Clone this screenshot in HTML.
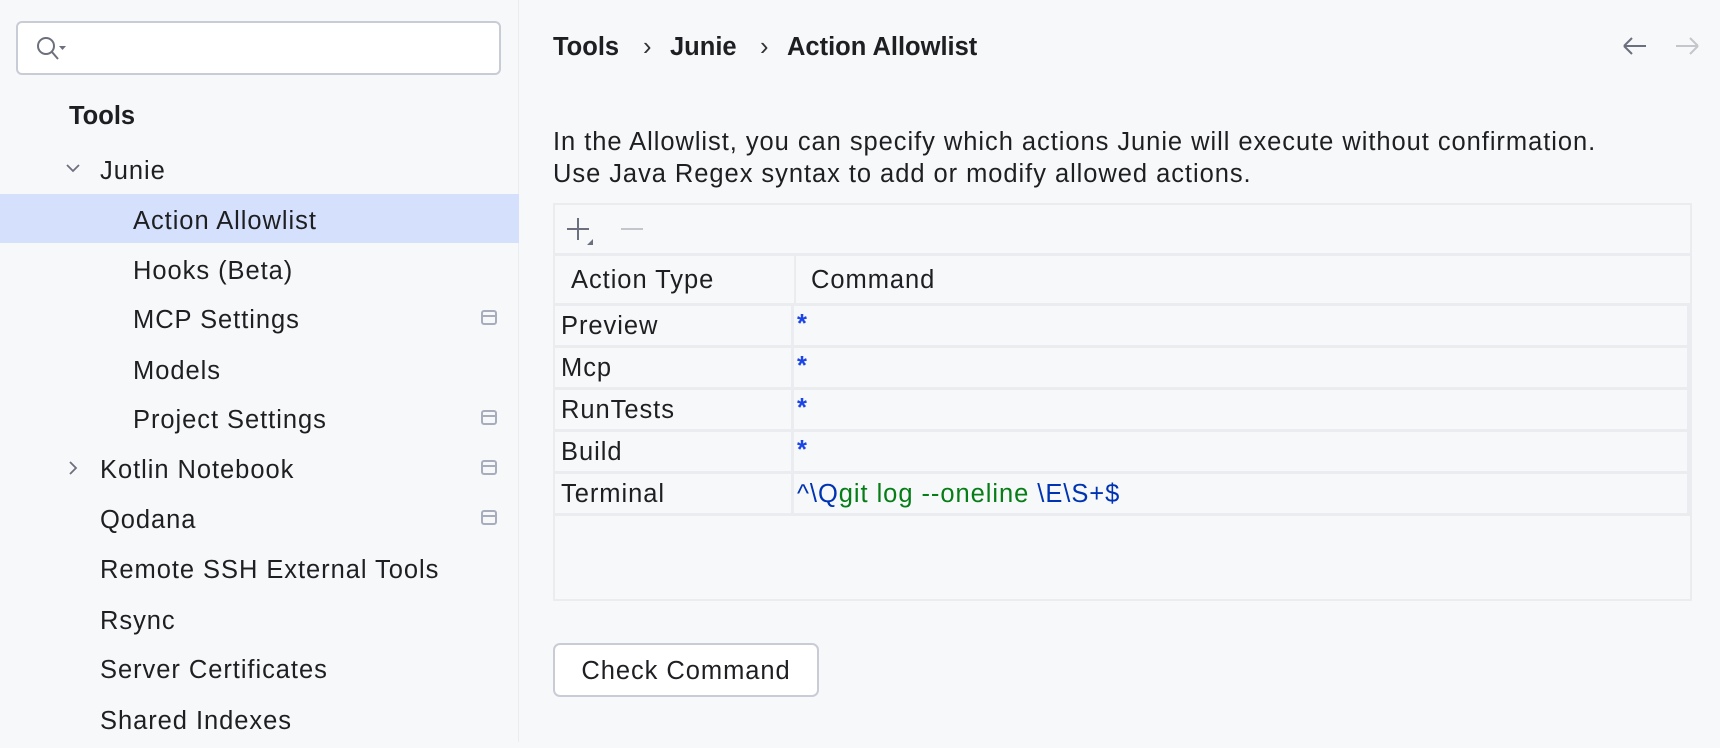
<!DOCTYPE html>
<html><head><meta charset="utf-8"><style>
*{margin:0;padding:0;box-sizing:border-box}
body{width:1720px;height:742px;background:#f7f8fa;font-family:"Liberation Sans",sans-serif;color:#1e1f22;position:relative;overflow:hidden;font-size:25.5px;letter-spacing:0.95px}
.a{position:absolute;white-space:nowrap}
.bo{font-weight:bold;letter-spacing:0}
.side{position:absolute;left:0;top:0;width:519px;height:742px;background:#f7f8fa;border-right:1px solid #ebecf0}
.search{position:absolute;left:16px;top:21px;width:485px;height:54px;background:#fff;border:2px solid #c9ccd6;border-radius:6px}
.t{position:absolute;white-space:nowrap;line-height:54px;height:50px}
.ic{position:absolute;left:481px;width:16px;height:15px;border:2px solid #a8adbd;border-radius:3px}
.ic:after{content:"";position:absolute;left:0;right:0;top:3px;border-top:2px solid #a8adbd}
.tbl{position:absolute;left:553px;top:203px;width:1139px;height:398px;border:2px solid #ebecf0;background:#f7f8fa}
.row{position:absolute;left:0;height:42px;width:100%;border-top:3px solid #ebecf0}
.c1{position:absolute;left:6px;top:0;line-height:41px}
.c2{position:absolute;left:242px;top:0;line-height:37px;font-weight:bold}
.cell{position:absolute;left:236px;right:0;top:0;bottom:0;border-left:3px solid #ebecf0;border-right:3px solid #ebecf0}
.b{color:#1c45e8}.d{color:#0033b3}.g{color:#067d17}
</style></head><body>
<div class="side">
 <div class="search"><svg style="position:absolute;left:17px;top:12px" width="32" height="28" viewBox="0 0 32 28"><circle cx="11" cy="11" r="8" fill="none" stroke="#6c707e" stroke-width="2"/><path d="M17 17l6 7" stroke="#6c707e" stroke-width="2"/><path d="M24 11h7l-3.5 4z" fill="#6c707e"/></svg></div>
 <div class="t bo" style="left:69px;top:89px">Tools</div>
 <svg class="a" style="left:65px;top:162px" width="16" height="12"><path d="M2 3l6 6 6-6" fill="none" stroke="#6c707e" stroke-width="1.8"/></svg>
 <div class="t" style="left:100px;top:144px">Junie</div>
 <div class="a" style="left:0;top:194px;width:519px;height:49px;background:#d5e1fc"></div>
 <div class="t" style="left:133px;top:194px">Action Allowlist</div>
 <div class="t" style="left:133px;top:244px">Hooks (Beta)</div>
 <div class="t" style="left:133px;top:293px">MCP Settings</div><div class="ic" style="top:310px"></div>
 <div class="t" style="left:133px;top:344px">Models</div>
 <div class="t" style="left:133px;top:393px">Project Settings</div><div class="ic" style="top:410px"></div>
 <svg class="a" style="left:67px;top:460px" width="12" height="16"><path d="M3 2l6 6-6 6" fill="none" stroke="#6c707e" stroke-width="1.8"/></svg>
 <div class="t" style="left:100px;top:443px">Kotlin Notebook</div><div class="ic" style="top:460px"></div>
 <div class="t" style="left:100px;top:493px">Qodana</div><div class="ic" style="top:510px"></div>
 <div class="t" style="left:100px;top:543px">Remote SSH External Tools</div>
 <div class="t" style="left:100px;top:594px">Rsync</div>
 <div class="t" style="left:100px;top:643px">Server Certificates</div>
 <div class="t" style="left:100px;top:694px">Shared Indexes</div>
</div>
<div class="a bo" style="left:553px;top:32px;line-height:30px">Tools</div>
<div class="a" style="left:643px;top:32px;line-height:30px;color:#333">›</div>
<div class="a bo" style="left:670px;top:32px;line-height:30px">Junie</div>
<div class="a" style="left:760px;top:32px;line-height:30px;color:#333">›</div>
<div class="a bo" style="left:787px;top:32px;line-height:30px">Action Allowlist</div>
<svg class="a" style="left:1620px;top:36px" width="80" height="20"><path d="M4 10h22M4 10l8-8M4 10l8 8" fill="none" stroke="#6c707e" stroke-width="2"/><path d="M56 10h22M78 10l-8-8M78 10l-8 8" fill="none" stroke="#c4c6cc" stroke-width="2"/></svg>
<div class="a" style="left:553px;top:127px;line-height:30px">In the Allowlist, you can specify which actions Junie will execute without confirmation.</div>
<div class="a" style="left:553px;top:159px;line-height:30px">Use Java Regex syntax to add or modify allowed actions.</div>
<div class="tbl">
 <svg class="a" style="left:10px;top:11px" width="80" height="30"><path d="M13 2v22M2 13h22" stroke="#6c707e" stroke-width="2"/><path d="M28 23v6h-6z" fill="#6c707e"/><path d="M56 13h22" stroke="#c4c6cc" stroke-width="2"/></svg>
 <div class="row" style="top:48px;height:52px"><div class="c1" style="left:16px;line-height:48px">Action Type</div><div style="position:absolute;left:239px;top:0;bottom:0;border-left:2px solid #ebecf0"></div><div class="c1" style="left:256px;line-height:48px">Command</div></div>
 <div class="row" style="top:98px"><div class="c1">Preview</div><div class="cell"></div><div class="c2 b">*</div></div>
 <div class="row" style="top:140px"><div class="c1">Mcp</div><div class="cell"></div><div class="c2 b">*</div></div>
 <div class="row" style="top:182px"><div class="c1">RunTests</div><div class="cell"></div><div class="c2 b">*</div></div>
 <div class="row" style="top:224px"><div class="c1">Build</div><div class="cell"></div><div class="c2 b">*</div></div>
 <div class="row" style="top:266px"><div class="c1">Terminal</div><div class="cell"></div><div class="c2" style="line-height:41px;font-weight:normal"><span class="d">^\Q</span><span class="g">git log --oneline </span><span class="d">\E\S+$</span></div></div>
 <div class="row" style="top:308px;height:3px"></div>
</div>
<div class="a" style="left:553px;top:643px;width:266px;height:54px;background:#fff;border:2px solid #c9ccd6;border-radius:7px;text-align:center;line-height:52px">Check Command</div>
</body></html>
